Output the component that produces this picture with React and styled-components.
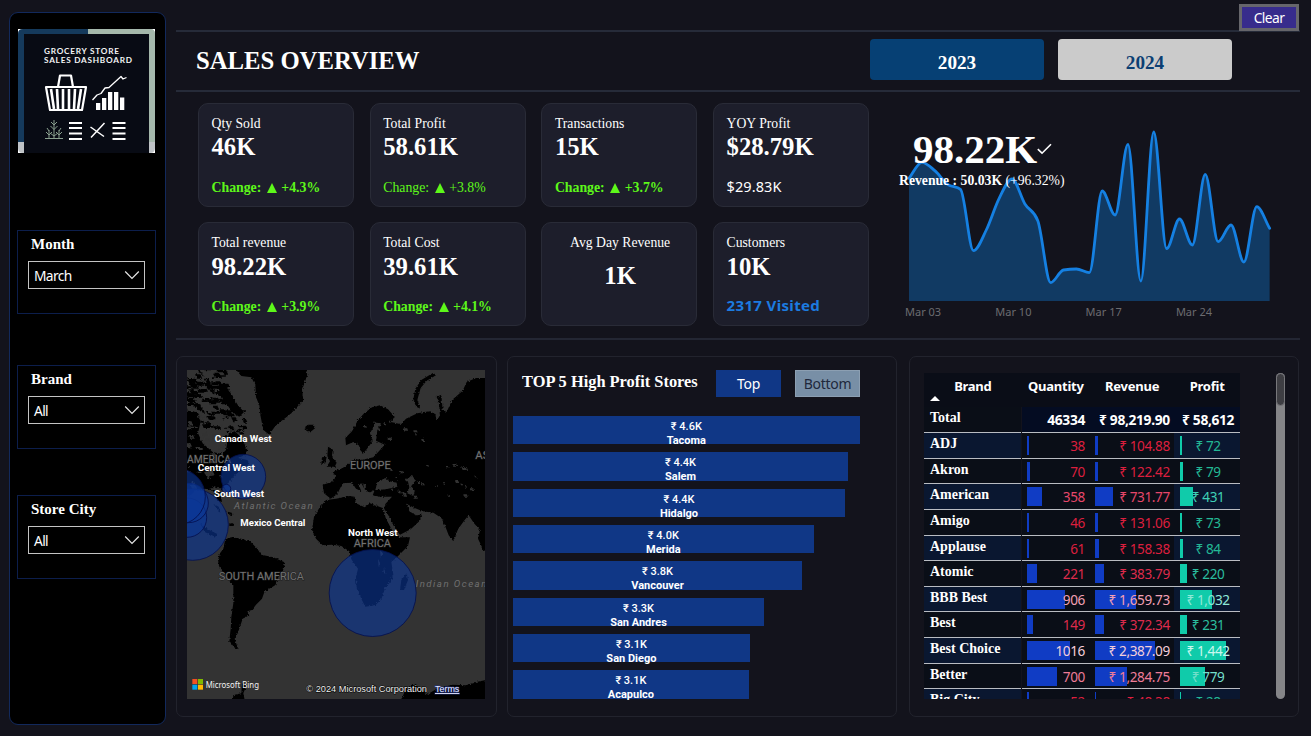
import React from "react";
import styled, { createGlobalStyle } from "styled-components";

const serif = `"Liberation Serif", "Times New Roman", serif`;
const sans = `"Noto Sans", "Open Sans", sans-serif`;
const din = `Roboto, "Noto Sans", sans-serif`;

const Global = createGlobalStyle`
  *, *::before, *::after { box-sizing: border-box; }
  body { margin: 0; background: #13131c; overflow: hidden; }
`;

const Page = styled.div`
  display: flex;
  width: 1311px;
  height: 736px;
  padding: 12px 11px 0 9px;
  gap: 10px;
  background: #13131c;
  color: #fff;
  font-family: ${serif};
  overflow: hidden;
`;

/* ---------- sidebar ---------- */

const Sidebar = styled.aside`
  width: 157px;
  height: 713px;
  flex: none;
  padding: 16px 0 0 7px;
  border: 1px solid #12295c;
  border-radius: 9px;
  background: #000;
`;

const Logo = styled.svg`
  display: block;
  margin: 0 0 77px 1px;
`;

const Slicer = styled.section`
  width: 139px;
  height: 84px;
  margin-bottom: ${(p) => p.$after}px;
  padding: 4px 10px 0;
  border: 1px solid #0c1e4c;
`;

const SlicerTitle = styled.h2`
  margin: 0 0 8px 3px;
  font-size: 15px;
  line-height: 18px;
  font-weight: 700;
`;

const Select = styled.div`
  display: flex;
  align-items: center;
  justify-content: space-between;
  width: 117px;
  height: 28px;
  padding: 0 4px 0 5px;
  border: 1px solid #c4c4c4;
  font-family: ${sans};
  font-size: 13.8px;
  letter-spacing: -0.65px;
`;

/* ---------- main ---------- */

const Main = styled.main`
  width: 1124px;
  height: 724px;
  margin-top: -12px;
`;

const TopBar = styled.div`
  display: flex;
  justify-content: flex-end;
  height: 30px;
  padding: 4px 1px 0 0;
`;

const ClearButton = styled.button`
  position: relative;
  width: 60px;
  height: 27px;
  padding: 0;
  border: 3px solid #66666b;
  background: #372c8c;
  color: #fff;
  font: 13.8px/20px ${sans};
  letter-spacing: -0.6px;
`;

const Header = styled.header`
  display: flex;
  align-items: center;
  height: 62px;
  padding: 0 68px 0 20px;
  border-top: 2px solid #262b39;
  border-bottom: 2px solid #262b39;
`;

const Title = styled.h1`
  flex: 1;
  margin: 0;
  font-size: 24.7px;
  line-height: 30px;
  font-weight: 700;
`;

const YearButton = styled.button`
  width: 174px;
  height: 41px;
  margin: -3px 0 0 14px;
  padding: 7px 0 0;
  border: 0;
  border-radius: 4px;
  background: ${(p) => (p.$active ? "#064074" : "#cbcbcb")};
  color: ${(p) => (p.$active ? "#fff" : "#0b3f73")};
  font: 700 19.2px/28px ${serif};
`;

const Summary = styled.section`
  display: flex;
  height: 248px;
  padding: 11px 0 0 22px;
  border-bottom: 2px solid #232633;
`;

const Cards = styled.div`
  display: grid;
  grid-template-columns: repeat(4, 156px);
  grid-auto-rows: 104px;
  column-gap: 15.7px;
  row-gap: 15px;
  width: 671px;
  flex: none;
`;

const Card = styled.article`
  padding: 11px 11px 0 12.5px;
  border: 1px solid #292b37;
  border-radius: 10px;
  background: #1d1e2b;
  text-align: ${(p) => (p.$center ? "center" : "left")};
`;

const CardLabel = styled.div`
  height: 18px;
  font-size: 13.7px;
  line-height: 18px;
`;

const CardValue = styled.div`
  margin-top: ${(p) => p.$drop || 0}px;
  font-size: 24.7px;
  line-height: 28px;
  font-weight: 700;
`;

const Change = styled.div`
  display: flex;
  align-items: center;
  margin-top: ${(p) => p.$gap}px;
  font-size: 13.8px;
  line-height: 20px;
  font-weight: ${(p) => (p.$bold ? 700 : 400)};
  color: #5df81a;
`;

const Triangle = styled.span`
  width: 0;
  height: 0;
  margin: 0 4.5px 0 5.5px;
  border: 5.5px solid transparent;
  border-top: 0;
  border-bottom: 10px solid #5df81a;
`;

const Note = styled.div`
  margin-top: ${(p) => p.$gap}px;
  font-family: ${sans};
  font-size: ${(p) => (p.$strong ? 15 : 14.5)}px;
  line-height: 20px;
  font-weight: ${(p) => (p.$strong ? 700 : 400)};
  color: ${(p) => (p.$strong ? "#1c7be0" : "#fff")};
  letter-spacing: ${(p) => (p.$strong ? 0.35 : 0.1)}px;
`;

const Trend = styled.div`
  position: relative;
  width: 400px;
  padding: 18px 0 0 40px;
`;

const TrendChart = styled.svg`
  display: block;
  overflow: visible;
`;

const Axis = styled.div`
  display: flex;
  margin: 2px 0 0 -4px;
  font: 11px/18px ${sans};
  color: #6c6c70;
`;

const Tick = styled.span`
  width: 90.3px;
`;

const Kpi = styled.div`
  position: absolute;
  left: 30px;
  top: 24px;
`;

const KpiValue = styled.div`
  display: flex;
  align-items: center;
  padding-left: 14px;
  font-size: 41px;
  line-height: 44px;
  font-weight: 700;
`;

const KpiGoal = styled.div`
  margin-top: 1px;
  font-size: 13.7px;
  line-height: 18px;
  white-space: nowrap;
`;

const Panels = styled.section`
  display: grid;
  grid-template-columns: 321px 390px 392px;
  column-gap: 10px;
  height: 361px;
  margin-top: 16px;
`;

const Panel = styled.article`
  height: 361px;
  border: 1px solid #22232d;
  border-radius: 7px;
  background: #13131c;
`;

const MapPanel = styled(Panel)`
  padding: 13px 0 0 10px;
`;

const WorldMap = styled.svg`
  display: block;
  background: #333;
`;

/* ---------- stores ---------- */

const StoresPanel = styled(Panel)`
  padding: 13px 0 0 5px;
`;

const StoresHead = styled.div`
  display: flex;
  align-items: flex-start;
  gap: 14px;
  height: 46px;
  padding-left: 9px;
`;

const StoresTitle = styled.h2`
  width: 180px;
  margin: 2px 0 0;
  font-size: 16.4px;
  line-height: 20px;
  font-weight: 700;
  white-space: nowrap;
`;

const RankButton = styled.button`
  width: 65px;
  height: 27px;
  padding: 1px 0 0;
  border: ${(p) => (p.$active ? "0" : "1px solid #8c9fb2")};
  background: ${(p) => (p.$active ? "#103786" : "#788fa6")};
  color: ${(p) => (p.$active ? "#fff" : "#20283c")};
  font: 14px/24px ${sans};
  letter-spacing: -0.25px;
`;

const Bars = styled.div`
  display: flex;
  flex-direction: column;
  gap: 8px;
`;

const Bar = styled.div`
  height: 28.35px;
  padding-top: 4px;
  background: #103786;
  text-align: center;
  font: 500 11px/13px ${din};
`;

const StoreName = styled.div`
  height: 11px;
  margin-top: 1px;
  line-height: 14px;
  font-weight: 700;
  font-size: 11px;
`;

/* ---------- table ---------- */

const TablePanel = styled(Panel)`
  display: flex;
  justify-content: space-between;
  margin-left: 2px;
  padding: 16px 13px 0 14px;
`;

const Table = styled.div`
  width: 316px;
  height: 326px;
  overflow: hidden;
  font-family: ${sans};
`;

const Row = styled.div`
  display: grid;
  grid-template-columns: 97.7px 73.3px 79.3px 65.7px;
  grid-template-rows: 100%;
  height: ${(p) => p.$h || 25.63}px;
`;

const Head = styled.div`
  position: relative;
  padding-top: 4px;
  background: #0a0d17;
  text-align: center;
  font-size: 13px;
  line-height: 18px;
  font-weight: 700;
  letter-spacing: -0.25px;
  padding-right: ${(p) => p.$pr || 0}px;
`;

const SortMark = styled.span`
  position: absolute;
  left: 6px;
  bottom: 6px;
  border: 5px solid transparent;
  border-top: 0;
  border-bottom-color: #fff;
`;

const BrandCell = styled.div`
  min-height: 0;
  padding-left: 6px;
  margin-right: 1px;
  border-bottom: 1px solid #b9bcc2;
  background: ${(p) => (p.$shade ? "#0a1730" : "#0a0e17")};
  font: 700 14px/21px ${serif};
`;

const NumCell = styled.div`
  position: relative;
  min-height: 0;
  padding: 1px ${(p) => p.$pr}px 0 ${(p) => p.$pl || 0}px;
  border-bottom: 1px solid #b9bcc2;
  background: ${(p) => (p.$total ? "#040c22" : p.$shade ? "#0a1730" : "#0a0e17")};
  color: ${(p) => p.$color};
  font-size: ${(p) => (p.$total ? 13.8 : 13.6)}px;
  line-height: 24px;
  font-weight: ${(p) => (p.$total ? 700 : 400)};
  letter-spacing: ${(p) => (p.$total ? -0.35 : -0.4)}px;
  text-align: ${(p) => (p.$center ? "center" : "right")};
  white-space: nowrap;
`;

const DataBar = styled.i`
  position: absolute;
  left: ${(p) => p.$x}px;
  top: 3px;
  height: 19px;
  background: ${(p) => p.$fill};
`;

const Digits = styled.span`
  position: relative;
`;

const ScrollTrack = styled.div`
  width: 9px;
  height: 326px;
  border-radius: 5px;
  background: #858588;
`;

const ScrollThumb = styled.div`
  height: 33px;
  border: 1px solid #77777b;
  border-radius: 5px;
  background: #3e3e43;
`;

/* ---------- data ---------- */

const cards = [
  { label: "Qty Sold", value: "46K", change: "+4.3%", bold: true },
  { label: "Total Profit", value: "58.61K", change: "+3.8%" },
  { label: "Transactions", value: "15K", change: "+3.7%", bold: true },
  { label: "YOY Profit", value: "$28.79K", note: "$29.83K" },
  { label: "Total revenue", value: "98.22K", change: "+3.9%", bold: true, drop: 1 },
  { label: "Total Cost", value: "39.61K", change: "+4.1%", bold: true, drop: 1 },
  { label: "Avg Day Revenue", value: "1K", center: true, drop: 10 },
  { label: "Customers", value: "10K", note: "2317 Visited", strong: true, drop: 1 },
];

const daily = [
  535, 487, 512, 553, 568, 752, 690, 595, 537, 612, 662, 848, 810, 807, 818, 573,
  645, 433, 843, 396, 746, 657, 735, 523, 725, 675, 786, 620, 685,
].map((v, i) => [i * 12.88, v / 3 - 121]);

const stores = [
  ["₹ 4.6K", "Tacoma", 346.7],
  ["₹ 4.4K", "Salem", 335],
  ["₹ 4.4K", "Hidalgo", 332],
  ["₹ 4.0K", "Merida", 300.7],
  ["₹ 3.8K", "Vancouver", 289],
  ["₹ 3.3K", "San Andres", 251],
  ["₹ 3.1K", "San Diego", 236.8],
  ["₹ 3.1K", "Acapulco", 235.8],
];

const brands = [
  ["ADJ", "38", 2, "₹ 104.88", 2.5, "₹ 72", 1.7, "#dc1f3e", "#23b895"],
  ["Akron", "70", 3.5, "₹ 122.42", 2.7, "₹ 79", 2.3, "#dc1f3e", "#23b895"],
  ["American", "358", 15.5, "₹ 731.77", 17.7, "₹ 431", 13, "#e6476a", "#3fd0b6"],
  ["Amigo", "46", 2.7, "₹ 131.06", 2.7, "₹ 73", 1.7, "#dc1f3e", "#23b895"],
  ["Applause", "61", 2.3, "₹ 158.38", 3.5, "₹ 84", 2.3, "#dc1f3e", "#23b895"],
  ["Atomic", "221", 10, "₹ 383.79", 8.7, "₹ 220", 6.3, "#de2b4c", "#2bbd9f"],
  ["BBB Best", "906", 38.7, "₹ 1,659.73", 40.7, "₹ 1,032", 32, "#f2a0b4", "#8fe8d8"],
  ["Best", "149", 6.3, "₹ 372.34", 8.7, "₹ 231", 6.3, "#de2b4c", "#2bbd9f"],
  ["Best Choice", "1016", 43.3, "₹ 2,387.09", 59.7, "₹ 1,442", 45.5, "#f4cfda", "#c9f7ee"],
  ["Better", "700", 30, "₹ 1,284.75", 31.7, "₹ 779", 24.3, "#ee7c97", "#74dfcb"],
  ["Big City", "52", 2, "₹ 48.38", 1, "₹ 28", 1, "#dc1f3e", "#23b895"],
];

/* Monotone cubic path through the points */
function smooth(p) {
  const n = p.length;
  const s = [];
  for (let i = 0; i < n - 1; i++) s.push((p[i + 1][1] - p[i][1]) / (p[i + 1][0] - p[i][0]));
  const t = p.map((_, i) => {
    if (i === 0) return s[0];
    if (i === n - 1) return s[n - 2];
    const a = s[i - 1];
    const b = s[i];
    if (a * b <= 0) return 0;
    return Math.sign(a) * Math.min(Math.abs(a), Math.abs(b), Math.abs(a + b) / 4) * 2;
  });
  let d = `M${p[0]}`;
  for (let i = 0; i < n - 1; i++) {
    const h = (p[i + 1][0] - p[i][0]) / 3;
    d += `C${p[i][0] + h},${p[i][1] + t[i] * h} ${p[i + 1][0] - h},${p[i + 1][1] - t[i + 1] * h} ${p[i + 1]}`;
  }
  return d;
}

/* Seeded islets and lakes scattered over a rectangle */
function speckles(count, x, y, w, h, seed, max) {
  let r = seed;
  const next = () => (r = (r * 16807) % 2147483647) / 2147483647;
  let d = "";
  for (let i = 0; i < count; i++) {
    const a = x + next() * w;
    const b = y + next() * h;
    const c = 3 + next() * max;
    const e = 3 + next() * max * 0.6;
    d += `M${a.toFixed(0)} ${b.toFixed(0)}h${c.toFixed(0)}l${(e / 2).toFixed(0)} ${e.toFixed(0)}h${(-c).toFixed(0)}z`;
  }
  return d;
}

/* ---------- drawings ---------- */

function Chevron() {
  return (
    <svg width="16" height="10" viewBox="0 0 16 10" fill="none" stroke="#e6e6e6" strokeWidth="1.2">
      <path d="M1.2 1.5 8 8.3 14.8 1.5" />
    </svg>
  );
}

function LogoArt() {
  return (
    <Logo width="137" height="124" viewBox="0 0 137 124">
      <rect width="137" height="124" fill="#fff" />
      <path d="M5 0H132Q137 0 137 5V119Q137 124 132 124H5Q0 124 0 119V5Q0 0 5 0Z" fill="#bfc3c6" />
      <path d="M0 113V5Q0 0 5 0H70V113Z" fill="#153a5c" />
      <path d="M70 113V0H132Q137 0 137 5V113Z" fill="#a5b8ab" />
      <rect x="6" y="5" width="125" height="119" fill="#080b14" />
      <g fill="#f4f4f4" fontFamily="Lato, sans-serif" fontWeight="700" fontSize="8.2">
        <text x="26" y="25" textLength="75">GROCERY STORE</text>
        <text x="26" y="34" textLength="88">SALES DASHBOARD</text>
      </g>
      <g fill="none" stroke="#fff" strokeWidth="2" strokeLinejoin="round">
        <path d="M28 58H68L64 81H32ZM40 58 42 46.500H53L55 58" strokeWidth="2.2" />
        <path d="M33 60 36 80M39 60 40 80M45 60V80M51 60V80M57 60 56 80M63 60 60 80" strokeWidth="2.6" />
        <path d="M74.500 71 79 66 83 64.500 87 59 91 58.500 97 53 103 47.500 105 50 108.500 48.500" strokeWidth="1.3" />
      </g>
      <path d="M78 74h4.300v7H78zM84 69h4.300v12H84zM90 63h4.300v18H90zM96 63h4.300v18H96zM102 68.500h4.300v12.500H102z" fill="#fff" />
      <path
        d="M27 109.500H45M36 91V109.500M31 101V109.500M41 101V109.500M32.500 97 36 100.500 39.500 97M33 93 36 96 39 93M28 103 31 106 34 103M38 103 41 106 44 103M32 104 36 107 40 104M29 99 31 102M43 99 41 102"
        stroke="#8aa08f"
        strokeWidth="1"
        fill="none"
      />
      <path d="M51 94h13M51 99h13M51 104.500h13M51 110h13M94.500 94h13M94.500 99h13M94.500 104.500h13M94.500 110h13" stroke="#fff" strokeWidth="1.8" />
      <path d="M72.500 98 86 107.500M86.500 94 73 108.500" stroke="#fff" strokeWidth="1.5" />
    </Logo>
  );
}

function Trendline() {
  const line = smooth(daily);
  return (
    <TrendChart width="361" height="180" viewBox="0 0 361 180">
      <path d={`${line}L360.640,180L0,180Z`} fill="#113a63" />
      <path d={line} fill="none" stroke="#1580e2" strokeWidth="2.8" strokeLinejoin="round" strokeLinecap="round" />
    </TrendChart>
  );
}

function RegionMap() {
  return (
    <WorldMap width="298" height="329" viewBox="33 60 894 987">
      <defs>
        <filter id="coast" x="-5%" y="-5%" width="110%" height="110%">
          <feTurbulence type="fractalNoise" baseFrequency="0.17" numOctaves="3" seed="4" />
          <feDisplacementMap in="SourceGraphic" scale="9" xChannelSelector="R" yChannelSelector="G" />
        </filter>
      </defs>
      <g filter="url(#coast)">
        <g fill="#020202">
          {/* Greenland, Iceland */}
          <path d="M172 50 196 78 226 82 238 106 240 142 250 166 254 200 262 240 280 254 292 236 304 222 328 204 346 190 366 168 382 150 378 120 388 92 394 74 388 50Z" />
          <path d="M386 232 396 224 412 224 418 234 406 244 392 244Z" />
          {/* North America */}
          <path d="M20 180 60 186 74 214 66 250 80 280 110 306 138 312 150 300 158 250 176 244 196 262 214 300 206 316 186 324 214 330 220 340 196 360 176 376 160 396 142 412 134 434 138 456 126 452 112 424 92 416 60 420 40 440 20 430Z" />
          <path d="M128 112 150 104 170 140 186 166 204 186 190 200 172 190 156 168 134 140Z" />
          <path d={speckles(75, 20, 55, 120, 110, 77, 20)} />
          <path d={speckles(34, 30, 120, 130, 110, 991, 20)} />
          <path d={speckles(24, 140, 180, 60, 90, 5501, 16)} />
          {/* Caribbean */}
          <path d="M112 462 128 470 134 488 124 478ZM150 484 172 490 166 496ZM160 520 172 520 170 528 160 528ZM72 520 100 540 124 552 118 560 86 546Z" />
          {/* South America */}
          <path d="M148 566 166 562 196 566 222 574 244 596 256 614 292 622 324 636 326 652 306 684 298 706 266 724 258 746 240 764 228 780 214 784 220 796 200 806 192 830 184 852 176 866 182 884 188 898 174 892 160 872 164 836 166 800 172 760 172 706 152 684 130 650 126 630 132 610 142 596Z" />
          {/* British Isles */}
          <path d="M456 290 470 298 468 320 482 338 476 350 452 350 462 334 454 318ZM438 322 452 320 448 340 436 342Z" />
          {/* Eurasia */}
          <path d="M510 286 508 264 528 244 544 214 562 192 588 172 612 166 636 178 656 200 644 216 676 222 690 206 724 190 760 184 790 198 782 140 796 134 800 180 812 186 828 150 860 122 872 96 900 84 940 84 940 610 922 600 906 566 912 540 894 520 878 496 866 510 846 538 832 574 818 556 806 524 796 504 772 488 740 484 716 474 692 462 700 484 720 496 738 494 730 514 704 538 672 554 658 536 640 508 624 478 628 462 648 440 612 440 590 436 596 420 580 428 566 418 556 400 548 404 556 424 540 416 528 398 500 400 484 432 464 446 444 430 440 404 468 396 480 380 470 366 500 354 520 340 536 326 556 330 592 322 612 300 626 284 600 272 604 240 616 220 600 218 582 250 590 274 572 298 560 312 548 286 532 276Z" />
          <path d="M772 68 780 76 752 92 734 114 724 150 734 176 720 170 712 148 718 116 736 90Z" />
          {/* Africa */}
          <path d="M450 450 480 446 520 438 536 440 540 460 566 472 582 460 620 474 638 508 652 540 668 562 702 562 696 588 664 620 646 636 652 674 640 700 628 712 616 748 598 766 568 770 556 746 542 712 540 680 546 656 526 628 520 604 496 588 468 584 440 586 420 566 408 540 414 500 430 474Z" />
          <path d="M692 670 696 690 684 720 672 720 676 690Z" />
          {/* Antarctica */}
          <path d="M676 1050 690 1014 716 1004 744 1020 750 1036 786 1014 830 1004 870 1006 900 996 930 990 930 1050ZM166 1050 176 1034 196 1030 198 1000 212 1006 202 1030 206 1050Z" />
        </g>
        <g fill="#333">
          {/* Seas and lakes */}
          <path d="M598 420 604 396 628 384 640 394 662 398 664 410 630 418ZM694 388 708 374 718 392 706 408 716 424 712 438 694 430 700 412ZM574 352 584 352 582 362ZM620 470 640 500 658 540 664 556 650 544 630 506ZM84 366 110 362 116 376 92 380ZM560 400 566 416 572 408Z" />
          <path d="M778 140 788 150 792 200 780 208Z" />
          <path d={speckles(26, 640, 340, 260, 100, 313, 10)} />
          <path d={speckles(38, 25, 190, 110, 230, 41, 15)} />
          <path d={speckles(12, 560, 190, 180, 110, 1234, 9)} />
          <path d="M612 600 622 612 614 620ZM606 626 612 640 608 650ZM624 650 628 672 622 668Z" />
        </g>
      </g>
      <g fontFamily="Roboto, sans-serif" fill="#727272" stroke="#1b1b1b" strokeWidth="3" paintOrder="stroke" fontSize="34">
        <text x="33" y="338" textLength="132" lengthAdjust="spacingAndGlyphs" fontSize="31">AMERICA</text>
        <text x="522" y="357" textLength="122" lengthAdjust="spacingAndGlyphs">EUROPE</text>
        <text x="533" y="591" textLength="112" lengthAdjust="spacingAndGlyphs">AFRICA</text>
        <text x="128" y="689" textLength="256" lengthAdjust="spacingAndGlyphs">SOUTH AMERICA</text>
        <text x="898" y="326">ASIA</text>
      </g>
      <g fontFamily="Roboto, sans-serif" fontStyle="italic" fill="#707070" fontSize="29">
        <text x="174" y="476" textLength="236">Atlantic Ocean</text>
        <text x="719" y="711" textLength="212">Indian Ocean</text>
      </g>
      <g fill="#0c3796" fillOpacity="0.62" stroke="#04104e" strokeWidth="2.5">
        <circle cx="50" cy="524" r="107" />
        <circle cx="590" cy="729" r="130.500" />
        <circle cx="202" cy="380" r="67" />
        <circle cx="33" cy="503" r="59" />
        <circle cx="38" cy="459" r="59" />
        <circle cx="4" cy="440" r="84" />
        <circle cx="151" cy="416" r="13" />
      </g>
      <g fontFamily="Roboto, sans-serif" fontWeight="700" fontSize="28.500" fill="#fff">
        <text x="116" y="276" textLength="171" lengthAdjust="spacingAndGlyphs">Canada West</text>
        <text x="65" y="363" textLength="172" lengthAdjust="spacingAndGlyphs">Central West</text>
        <text x="114" y="441" textLength="150" lengthAdjust="spacingAndGlyphs">South West</text>
        <text x="193" y="528" textLength="195" lengthAdjust="spacingAndGlyphs">Mexico Central</text>
        <text x="516" y="558" textLength="149" lengthAdjust="spacingAndGlyphs">North West</text>
      </g>
      <path d="M49 987h15v15h-15z" fill="#f25022" />
      <path d="M66 987h15v15h-15z" fill="#7fba00" />
      <path d="M49 1004h15v15h-15z" fill="#00a4ef" />
      <path d="M66 1004h15v15h-15z" fill="#ffb900" />
      <g fill="#f2f2f2" fontFamily="'Noto Sans', sans-serif">
        <text x="89" y="1014" fontSize="27" textLength="160" lengthAdjust="spacingAndGlyphs">Microsoft Bing</text>
        <g fontFamily="'Liberation Sans', sans-serif" fontSize="27" stroke="#000" strokeWidth="3" paintOrder="stroke">
          <text x="391" y="1026" textLength="362" lengthAdjust="spacingAndGlyphs">© 2024 Microsoft Corporation</text>
          <text x="777" y="1026" textLength="73" lengthAdjust="spacingAndGlyphs" fill="#e4e8ff" stroke="#26357c" textDecoration="underline">Terms</text>
        </g>
      </g>
    </WorldMap>
  );
}

/* ---------- page ---------- */

function Filter({ title, value, after }) {
  return (
    <Slicer $after={after}>
      <SlicerTitle>{title}</SlicerTitle>
      <Select>
        {value}
        <Chevron />
      </Select>
    </Slicer>
  );
}

function KpiCard({ c }) {
  return (
    <Card $center={c.center}>
      <CardLabel>{c.label}</CardLabel>
      <CardValue $drop={c.drop}>{c.value}</CardValue>
      {c.change && (
        <Change $bold={c.bold} $gap={c.drop ? 16 : 17}>
          Change:
          <Triangle />
          {c.change}
        </Change>
      )}
      {c.note && (
        <Note $strong={c.strong} $gap={c.strong ? 14 : 15}>
          {c.note}
        </Note>
      )}
    </Card>
  );
}

function BrandRow({ b, shade }) {
  const [name, qty, qw, rev, rw, profit, pw, red, green] = b;
  return (
    <Row>
      <BrandCell $shade={shade}>{name}</BrandCell>
      <NumCell $pr={10} $color={red}>
        <DataBar $x={5} $fill="#103cc4" style={{ width: qw }} />
        <Digits>{qty}</Digits>
      </NumCell>
      <NumCell $pr={4.5} $color={red}>
        <DataBar $x={0.5} $fill="#103cc4" style={{ width: rw }} />
        <Digits>{rev}</Digits>
      </NumCell>
      <NumCell $center $pl={2} $pr={0} $shade={shade} $color={green}>
        <DataBar $x={6} $fill="#10cbaa" style={{ width: pw }} />
        <Digits>{profit}</Digits>
      </NumCell>
    </Row>
  );
}

export default function App() {
  return (
    <Page>
      <Global />
      <Sidebar>
        <LogoArt />
        <Filter title="Month" value="March" after={51} />
        <Filter title="Brand" value="All" after={46} />
        <Filter title="Store City" value="All" after={0} />
      </Sidebar>
      <Main>
        <TopBar>
          <ClearButton>Clear</ClearButton>
        </TopBar>
        <Header>
          <Title>SALES OVERVIEW</Title>
          <YearButton $active>2023</YearButton>
          <YearButton>2024</YearButton>
        </Header>
        <Summary>
          <Cards>
            {cards.map((c) => (
              <KpiCard key={c.label} c={c} />
            ))}
          </Cards>
          <Trend>
            <Trendline />
            <Axis>
              <Tick>Mar 03</Tick>
              <Tick>Mar 10</Tick>
              <Tick>Mar 17</Tick>
              <Tick>Mar 24</Tick>
            </Axis>
            <Kpi>
              <KpiValue>
                98.22K
                <svg width="15" height="12" viewBox="0 0 15 12" fill="none" stroke="#fff" strokeWidth="1.6">
                  <path d="M0.800 6.200 5 10.200 14 1.200" />
                </svg>
              </KpiValue>
              <KpiGoal>
                <b>Revenue : 50.03K</b> (+96.32%)
              </KpiGoal>
            </Kpi>
          </Trend>
        </Summary>
        <Panels>
          <MapPanel>
            <RegionMap />
          </MapPanel>
          <StoresPanel>
            <StoresHead>
              <StoresTitle>TOP 5 High Profit Stores</StoresTitle>
              <RankButton $active>Top</RankButton>
              <RankButton>Bottom</RankButton>
            </StoresHead>
            <Bars>
              {stores.map(([value, name, width]) => (
                <Bar key={name} style={{ width }}>
                  {value}
                  <StoreName>{name}</StoreName>
                </Bar>
              ))}
            </Bars>
          </StoresPanel>
          <TablePanel>
            <Table>
              <Row $h={34}>
                <Head>
                  Brand
                  <SortMark />
                </Head>
                <Head $pr={5}>Quantity</Head>
                <Head $pr={5}>Revenue</Head>
                <Head>Profit</Head>
              </Row>
              <Row $h={26}>
                <BrandCell>Total</BrandCell>
                <NumCell $total $pr={10} $color="#fff">46334</NumCell>
                <NumCell $total $pr={4.5} $color="#fff">₹ 98,219.90</NumCell>
                <NumCell $total $center $pl={2} $pr={0} $color="#fff">₹ 58,612</NumCell>
              </Row>
              {brands.map((b, i) => (
                <BrandRow key={b[0]} b={b} shade={i % 2 === 0} />
              ))}
            </Table>
            <ScrollTrack>
              <ScrollThumb />
            </ScrollTrack>
          </TablePanel>
        </Panels>
      </Main>
    </Page>
  );
}
